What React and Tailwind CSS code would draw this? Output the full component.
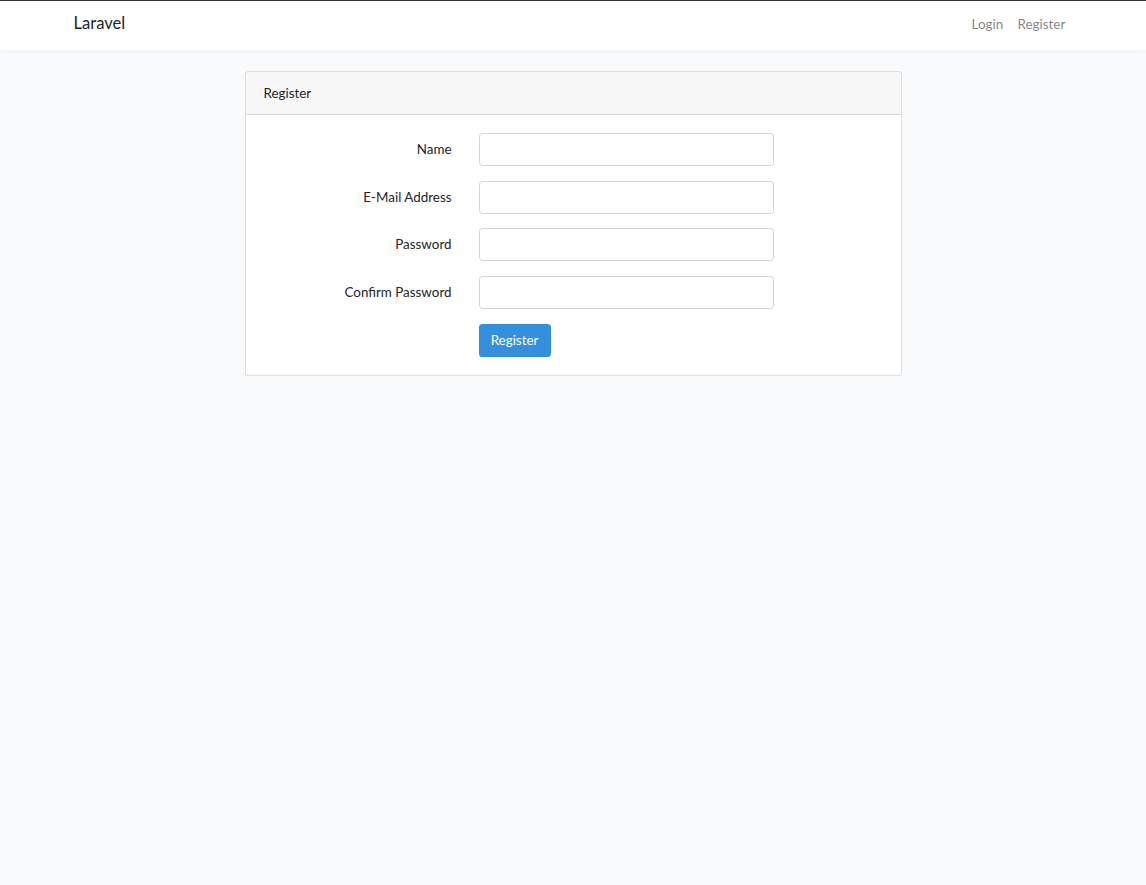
import React from 'react';

const font = { fontFamily: 'Lato, "Open Sans", sans-serif' };

const fields = [
  { label: 'Name', type: 'text' },
  { label: 'E-Mail Address', type: 'email' },
  { label: 'Password', type: 'password' },
  { label: 'Confirm Password', type: 'password' },
];

const App = () => {
  return (
    <div className="min-h-[885px] bg-[#f8fafc] text-[13.4px] leading-[1.55] text-[#212529]" style={font}>
      {/* Navbar */}
      <nav className="bg-white border-t border-[#333] shadow-[0_2px_4px_rgba(0,0,0,0.04)]">
        <div className="mx-auto flex h-[49px] w-[1026px] items-center justify-between px-[13.5px] pb-[3px]">
          <a className="text-[16.6px] text-[#212529]">Laravel</a>
          <div className="flex">
            <a className="px-[7.2px] text-[rgba(0,0,0,0.5)]">Login</a>
            <a className="px-[7.2px] text-[rgba(0,0,0,0.5)]">Register</a>
          </div>
        </div>
      </nav>

      {/* Card */}
      <main className="pt-[21px]">
        <div className="mx-auto w-[657px] rounded-[3.6px] border border-[rgba(0,0,0,0.125)] bg-white">
          <div className="border-b border-[rgba(0,0,0,0.125)] bg-[rgba(0,0,0,0.03)] px-[18px] py-[10.8px]">
            Register
          </div>
          <div className="p-[18px]">
            <form className="flex flex-col gap-[14.4px]">
              {fields.map((f) => (
                <div key={f.label} className="flex items-center">
                  <label className="w-[188px] text-right">{f.label}</label>
                  <input
                    type={f.type}
                    className="ml-[27px] h-[33px] w-[295px] rounded-[3.6px] border border-[#ced4da] bg-white px-[10.8px] outline-none"
                  />
                </div>
              ))}
              <div className="flex pt-[1px]">
                <button
                  type="button"
                  className="ml-[215px] h-[33px] w-[72px] rounded-[3.6px] bg-[#3490dc] text-white"
                >
                  Register
                </button>
              </div>
            </form>
          </div>
        </div>
      </main>
    </div>
  );
};

export default App;
